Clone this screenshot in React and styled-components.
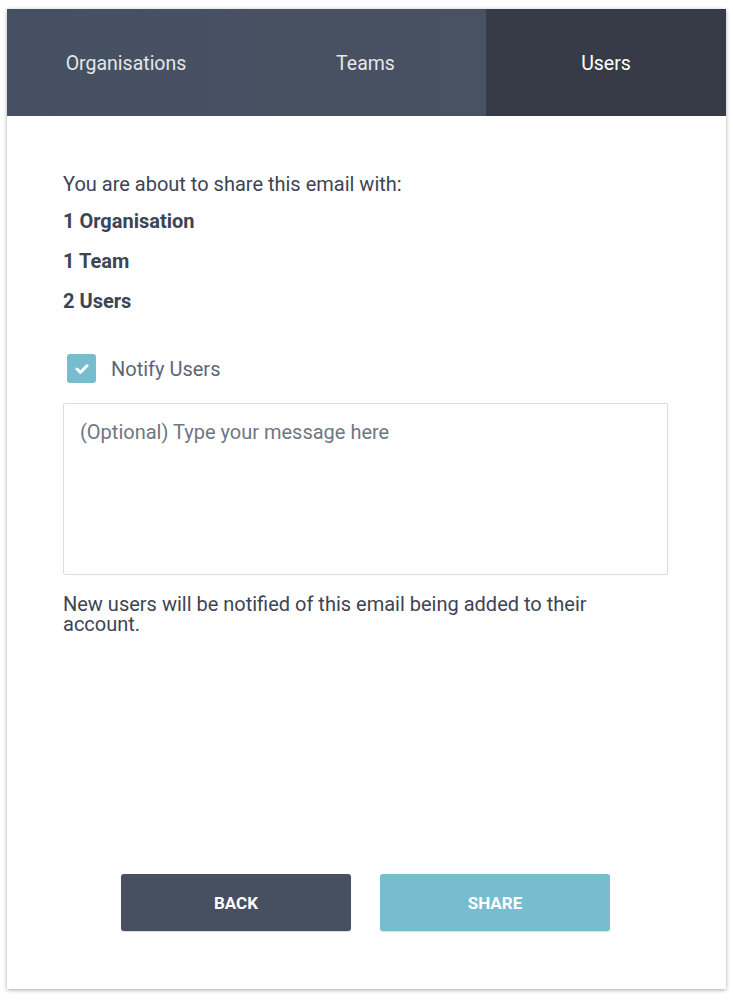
import React from "react";
import styled, { createGlobalStyle } from "styled-components";

const Global = createGlobalStyle`
  html, body { margin: 0; padding: 0; background: #ffffff; }
  body { font-family: Roboto, "Liberation Sans", sans-serif; }
  * { box-sizing: border-box; }
`;

const Page = styled.div`
  padding: 9px 7px 11px 7px;
  width: 733px;
`;

const Card = styled.div`
  width: 719px;
  height: 980px;
  background: #ffffff;
  box-shadow: 0 1px 4px rgba(0, 0, 0, 0.35);
  display: flex;
  flex-direction: column;
`;

const Tabs = styled.div`
  display: grid;
  grid-template-columns: 238px 241px 240px;
  height: 107px;
  background: linear-gradient(90deg, #455062 0%, #4a5262 100%);
`;

const Tab = styled.div`
  display: flex;
  align-items: center;
  justify-content: center;
  color: ${(p) => (p.$active ? "#ffffff" : "#e3e6ea")};
  background: ${(p) => (p.$active ? "#363b47" : "transparent")};
  font-size: 19.5px;
  font-weight: 400;
  padding-top: 2px;
`;

const Body = styled.div`
  flex: 1;
  display: flex;
  flex-direction: column;
  padding: 57px 58px 0 56px;
  color: #3d4453;
`;

const Intro = styled.p`
  margin: 0;
  font-size: 20px;
  line-height: 22px;
`;

const Count = styled.p`
  margin: ${(p) => (p.$first ? "15px" : "18px")} 0 0 0;
  font-size: 20px;
  font-weight: 700;
  line-height: 22px;
`;

const CheckRow = styled.label`
  display: flex;
  align-items: center;
  gap: 15px;
  margin: 42px 0 0 4px;
  font-size: 20px;
  color: #5c6679;
`;

const Box = styled.span`
  width: 29px;
  height: 29px;
  border-radius: 3px;
  background: #78bccf;
  display: flex;
  align-items: center;
  justify-content: center;
`;

const Message = styled.textarea`
  margin-top: 20px;
  width: 605px;
  height: 172px;
  border: 1px solid #d8dde4;
  border-radius: 2px;
  padding: 16px 16px;
  resize: none;
  font-family: Roboto, "Liberation Sans", sans-serif;
  font-size: 20px;
  line-height: 24px;
  color: #3d4453;
  outline: none;
  &::placeholder { color: #6f7682; }
`;

const Note = styled.p`
  margin: 19px 0 0 0;
  font-size: 20px;
  line-height: 20px;
  max-width: 560px;
`;

const Footer = styled.div`
  display: flex;
  justify-content: center;
  gap: 29px;
  padding: 0 2px 58px 0;
`;

const Button = styled.button`
  width: 230px;
  height: 57px;
  border: none;
  border-radius: 3px;
  background: ${(p) => (p.$primary ? "#78bccf" : "#475061")};
  color: #ffffff;
  font-family: Roboto, "Liberation Sans", sans-serif;
  font-size: 17px;
  font-weight: 700;
  text-transform: uppercase;
  box-shadow: 0 1px 1px rgba(0, 0, 0, 0.15);
  cursor: pointer;
`;

export default function App() {
  return (
    <>
      <Global />
      <Page>
        <Card>
          <Tabs>
            <Tab>Organisations</Tab>
            <Tab>Teams</Tab>
            <Tab $active>Users</Tab>
          </Tabs>
          <Body>
            <Intro>You are about to share this email with:</Intro>
            <Count $first>1 Organisation</Count>
            <Count>1 Team</Count>
            <Count>2 Users</Count>
            <CheckRow>
              <Box>
                <svg width="14" height="12" viewBox="0 0 14 12">
                  <path d="M2 6 L5.5 9.3 L12 2.8" fill="none" stroke="#fff" strokeWidth="3" strokeLinecap="round" strokeLinejoin="round" />
                </svg>
              </Box>
              Notify Users
            </CheckRow>
            <Message placeholder="(Optional) Type your message here" />
            <Note>New users will be notified of this email being added to their account.</Note>
          </Body>
          <Footer>
            <Button>Back</Button>
            <Button $primary>Share</Button>
          </Footer>
        </Card>
      </Page>
    </>
  );
}
